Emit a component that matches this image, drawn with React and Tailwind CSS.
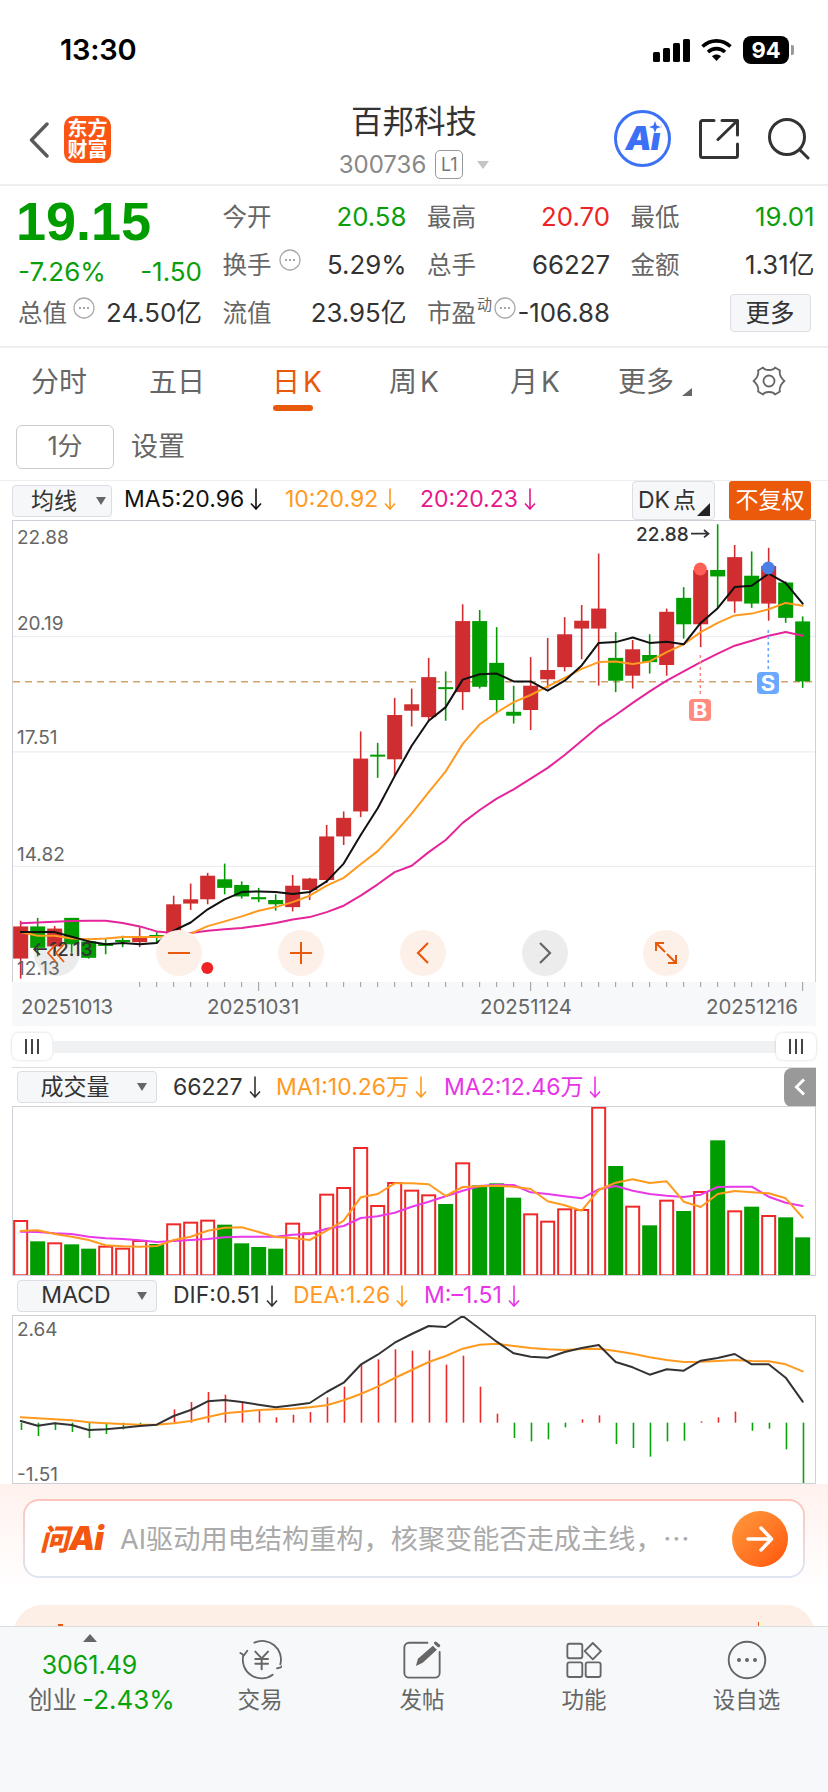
import React from 'react';

const RED = '#cf2d2f';
const GREEN = '#009c00';
const X = (i) => 20.67 + 17 * i;
const Y = (z) => 510 + z / 2.8;
const V = (z) => 1060 + z / 3;

const candles = [
  ['r',1150,1166,1256,1312],['g',1142,1166,1226,1250],['r',1165,1172,1222,1240],['g',1142,1142,1216,1240],
  ['g',1200,1208,1254,1256],['g',1200,1215,1219,1244],['g',1192,1204,1208,1224],['r',1168,1196,1210,1224],
  ['g',1182,1190,1196,1210],['r',1080,1104,1190,1196],['r',1046,1090,1102,1120],['r',1016,1024,1090,1104],
  ['g',990,1034,1058,1076],['g',1040,1050,1082,1088],['g',1058,1084,1090,1098],['g',1076,1092,1104,1122],
  ['r',1022,1052,1112,1124],['r',1030,1032,1064,1092],['r',882,914,1036,1044],['r',844,862,914,938],
  ['r',620,696,844,860],['g',652,685,690,750],['r',526,574,698,745],['r',500,544,562,606],
  ['r',414,468,580,590],['g',452,496,500,590],['r',264,311,510,560],['g',280,311,495,500],
  ['g',328,428,532,570],['g',492,565,576,598],['r',412,492,560,616],['r',358,448,474,500],
  ['r',300,348,440,452],['r',266,310,332,418],['r',122,276,332,492],['g',342,414,478,510],
  ['r',364,390,464,500],['g',348,406,426,458],['r',276,285,434,464],['g',216,246,320,360],
  ['r',150,168,320,384],['g',40,168,186,274],['r',98,132,256,288],['g',116,184,262,274],
  ['r',106,157,262,310],['g',200,203,302,316],['g',298,312,480,498],
];
const ma5 = [1182,1182,1182,1195,1208,1216,1212,1216,1212,1178,1155,1118,1090,1070,1068,1070,1075,1070,1040,990,910,835,745,660,590,552,475,460,458,480,480,506,478,435,372,370,357,372,369,376,316,275,216,212,178,205,262];
const ma10 = [1182,1192,1192,1200,1202,1200,1196,1196,1196,1192,1186,1165,1152,1138,1122,1112,1098,1080,1052,1030,992,955,905,850,790,732,655,600,567,538,518,494,470,445,426,424,431,424,398,376,342,316,295,290,278,260,268];
const ma20 = [1157,1155,1153,1151,1150,1150,1156,1166,1180,1184,1184,1178,1174,1170,1164,1156,1147,1140,1126,1108,1080,1048,1014,996,958,924,876,840,808,782,752,722,686,646,606,574,540,508,478,452,426,402,380,366,352,342,352];

const vols = [['r',483],['g',544],['r',550],['g',553],['g',566],['r',560],['r',566],['r',543],['g',552],['r',493],['r',488],['r',482],['g',494],['g',550],['g',561],['g',566],['r',491],['r',520],['r',404],['r',384],['r',264],['r',438],['r',369],['r',392],['r',406],['g',432],['r',310],['g',376],['g',370],['g',413],['r',463],['r',485],['r',448],['r',450],['r',143],['g',318],['r',440],['g',496],['r',422],['g',453],['r',396],['g',241],['r',454],['g',440],['r',468],['g',472],['g',532]];
const vm1 = [513,511,522,530,540,556,559,560,558,540,530,512,503,502,516,531,534,540,512,482,412,402,370,370,373,408,381,379,377,380,387,424,436,452,390,368,358,369,364,425,441,402,393,397,400,415,473];
const vm2 = [515,516,520,522,530,535,537,541,546,543,540,537,532,530,530,530,524,522,506,498,474,469,458,440,425,409,392,378,374,375,397,402,409,415,388,378,392,402,407,411,404,381,380,380,410,428,438];

const macd = [1110,1128,1110,1116,1134,1122,1108,1096,1088,1048,1026,996,1004,1026,1052,1072,1064,1056,1012,980,914,898,868,872,871,914,887,980,1061,1134,1144,1138,1102,1078,1066,1152,1164,1190,1144,1142,1084,1072,1055,1112,1106,1168,1272];
const dif = [1083,1097,1090,1095,1110,1108,1103,1098,1094,1068,1050,1024,1020,1026,1034,1042,1036,1029,996,968,914,884,848,822,798,801,768,806,845,880,890,893,876,864,855,906,922,944,928,932,902,894,882,913,913,953,1025];
const dea = [1072,1075,1078,1081,1087,1090,1092,1094,1094,1090,1083,1071,1060,1055,1050,1048,1046,1042,1036,1021,1002,980,954,930,906,888,866,854,851,858,864,868,870,867,866,873,881,892,900,906,905,903,900,903,904,913,934];

const pts = (arr, f) => arr.map((z, i) => `${X(i).toFixed(1)},${f(z).toFixed(1)}`).join(' ');

function Line({ data, f, color, w = 2 }) {
  return <polyline points={pts(data, f)} fill="none" stroke={color} strokeWidth={w} strokeLinejoin="round" strokeLinecap="round" />;
}

function Arrow() {
  return (
    <svg width="12" height="22" viewBox="0 0 12 22" className="ml-[6px] shrink-0" fill="none" stroke="currentColor" strokeWidth="1.6">
      <path d="M6 0.5V21M1 15.5L6 21L11 15.5" />
    </svg>
  );
}

function Dots({ className = '' }) {
  return (
    <svg width="22" height="22" viewBox="0 0 22 22" className={`shrink-0 ${className}`}>
      <circle cx="11" cy="11" r="10" fill="none" stroke="#aaaaaa" strokeWidth="1.3" />
      <circle cx="7" cy="11" r="1" fill="#888888" />
      <circle cx="11" cy="11" r="1" fill="#888888" />
      <circle cx="15" cy="11" r="1" fill="#888888" />
    </svg>
  );
}

function Cell({ label, value, color = '#333333', icon }) {
  return (
    <div className="flex items-center justify-between h-[48px]">
      <div className="flex items-center text-[#666666] text-[24.5px]">
        <span>{label}</span>
        {icon}
      </div>
      <span className="text-[25.8px]" style={{ color }}>{value}</span>
    </div>
  );
}

function Handle() {
  return (
    <div className="w-[40px] h-[27px] rounded-[7px] bg-white shadow-[0_0_3px_rgba(0,0,0,0.18)] flex items-center justify-center gap-[4px] shrink-0">
      <div className="w-[2px] h-[15px] bg-[#444444]" />
      <div className="w-[2px] h-[15px] bg-[#444444]" />
      <div className="w-[2px] h-[15px] bg-[#444444]" />
    </div>
  );
}

function Select({ children }) {
  return (
    <div className="relative flex items-center justify-center w-[140px] h-[32px] rounded-[4px] bg-[#f6f7f9] border border-[#dcdee3] text-[#333333] text-[23px] leading-none pr-[24px]">
      {children}
      <div className="absolute right-[9px] top-[11px] w-0 h-0 border-x-[5px] border-x-transparent border-t-[8px] border-t-[#666666]" />
    </div>
  );
}

function Circle({ left, bg, children }) {
  return (
    <div className={`absolute top-[409px] w-[46px] h-[46px] rounded-full flex items-center justify-center ${left} ${bg}`}>{children}</div>
  );
}

function MainChart() {
  return (
    <div className="relative ml-[12px] w-[804px] h-[462px] border-x border-t border-[#cfd1d8] overflow-hidden text-[19px] leading-none text-[#666666]">
      <svg width="802" height="461" viewBox="13 521 802 461" className="block">
        {[636.4, 751.8, 866.4].map((y) => (
          <line key={y} x1="13" x2="815" y1={y} y2={y} stroke="#ecedf2" strokeWidth="1.2" />
        ))}
        <line x1="13" x2="815" y1="681.8" y2="681.8" stroke="#d3a16c" strokeWidth="1.6" strokeDasharray="7 5" />
        <circle cx="56.7" cy="953" r="23" fill="#ececec" />
        {candles.map(([c, a, b, d, e], i) => {
          const col = c === 'r' ? RED : GREEN;
          const h = Math.max((d - b) / 2.8, 2);
          return (
            <g key={i}>
              <line x1={X(i)} x2={X(i)} y1={Y(a)} y2={Y(e)} stroke={col} strokeWidth="1.6" />
              <rect x={X(i) - 7.5} y={Y(b)} width="15" height={h} fill={col} />
            </g>
          );
        })}
        <Line data={ma20} f={Y} color="#e5249a" />
        <Line data={ma10} f={Y} color="#ff9a1f" />
        <Line data={ma5} f={Y} color="#111111" />
        <circle cx="700.3" cy="569" r="6.5" fill="#ff5f56" />
        <circle cx="768.3" cy="568" r="6.5" fill="#4a7fe6" />
        <line x1="700.3" x2="700.3" y1="655" y2="697" stroke="#ff8a80" strokeWidth="1.6" strokeDasharray="3 3" />
        <line x1="768.3" x2="768.3" y1="630" y2="672" stroke="#6aa9ff" strokeWidth="1.6" strokeDasharray="3 3" />
        <path d="M691 533.7H708M704 530L708.5 533.7L704 537.4" fill="none" stroke="#333333" strokeWidth="1.8" />
        <circle cx="207.3" cy="967.9" r="6" fill="#ee2424" />
      </svg>

      <span className="absolute left-[4px] top-[7px]">22.88</span>
      <span className="absolute left-[4px] top-[93px]">20.19</span>
      <span className="absolute left-[4px] top-[207px]">17.51</span>
      <span className="absolute left-[4px] top-[324px]">14.82</span>
      <span className="absolute left-[4px] top-[438px]">12.13</span>
      <span className="absolute left-[623px] top-[4px] text-[#333333] font-medium">22.88</span>
      <span className="absolute left-[18px] top-[419px] text-[#333333] font-medium">←12.13</span>

      <div className="absolute left-[676px] top-[178px] w-[22px] h-[22px] rounded-[4px] bg-[#ff8a7e] flex items-center justify-center text-white font-bold text-[22px]">B</div>
      <div className="absolute left-[744px] top-[151px] w-[22px] h-[22px] rounded-[4px] bg-[#6aa9ff] flex items-center justify-center text-white font-bold text-[22px]">S</div>

      <svg width="18" height="20" viewBox="0 0 18 20" className="absolute left-[34px] top-[422px]" fill="none" stroke="#e8590c" strokeWidth="1.8">
        <path d="M9 1L1 10L9 19M17 1L9 10L17 19" />
      </svg>

      <Circle left="left-[143px]" bg="bg-[#fdf0e9]">
        <div className="w-[22px] h-[2px] bg-[#e8590c]" />
      </Circle>
      <Circle left="left-[265px]" bg="bg-[#fdf0e9]">
        <svg width="24" height="24" viewBox="0 0 24 24" fill="none" stroke="#e8590c" strokeWidth="2"><path d="M1 12H23M12 1V23" /></svg>
      </Circle>
      <Circle left="left-[387px]" bg="bg-[#fdf0e9]">
        <svg width="14" height="24" viewBox="0 0 14 24" fill="none" stroke="#e8590c" strokeWidth="2.2"><path d="M12 2L2 12L12 22" /></svg>
      </Circle>
      <Circle left="left-[509px]" bg="bg-[#ececec]">
        <svg width="14" height="24" viewBox="0 0 14 24" fill="none" stroke="#666666" strokeWidth="2.2"><path d="M2 2L12 12L2 22" /></svg>
      </Circle>
      <Circle left="left-[630px]" bg="bg-[#fdf0e9]">
        <svg width="24" height="24" viewBox="0 0 24 24" fill="none" stroke="#e8590c" strokeWidth="2"><path d="M2 10V2H10M2 2L11 11M22 14V22H14M22 22L13 13" /></svg>
      </Circle>
    </div>
  );
}

function AxisBand() {
  const ticks = [];
  for (let i = 7; i <= 46; i++) ticks.push(i);
  return (
    <div className="relative ml-[12px] w-[804px] h-[44px] bg-[#f7f8fa] text-[20.4px] leading-none text-[#666666]">
      <svg width="804" height="10" viewBox="12 983 804 10" className="absolute left-0 top-0">
        {ticks.map((i) => (
          <line key={i} x1={X(i)} x2={X(i)} y1="983" y2={i === 14 || i === 30 || i === 46 ? 992 : 988} stroke="#999999" strokeWidth="1" />
        ))}
      </svg>
      <div className="flex pl-[9px] pt-[15px]">
        <span className="w-[186px]">20251013</span>
        <span className="w-[273px]">20251031</span>
        <span className="w-[226px]">20251124</span>
        <span>20251216</span>
      </div>
    </div>
  );
}

function VolChart() {
  return (
    <div className="ml-[12px] w-[804px] h-[170px] border border-[#cfd1d8]">
      <svg width="802" height="168" viewBox="13 1107 802 168" className="block">
        {vols.map(([c, z], i) =>
          c === 'r' ? (
            <rect key={i} x={X(i) - 6.5} y={V(z)} width="13" height={V(646) - V(z)} fill="#ffffff" stroke="#f02828" strokeWidth="2" />
          ) : (
            <rect key={i} x={X(i) - 7.5} y={V(z)} width="15" height={V(648) - V(z)} fill={GREEN} />
          )
        )}
        <Line data={vm2} f={V} color="#e83ae8" />
        <Line data={vm1} f={V} color="#ff9a1f" />
      </svg>
    </div>
  );
}

function MacdChart() {
  return (
    <div className="relative ml-[12px] w-[804px] h-[169px] border border-[#cfd1d8] text-[19px] leading-none text-[#666666]">
      <svg width="802" height="167" viewBox="13 1316 802 167" className="block">
        {macd.map((z, i) => (
          <line key={i} x1={X(i) + 0.8} x2={X(i) + 0.8} y1={V(1088)} y2={V(z)} stroke={z < 1088 ? '#f02828' : '#0aa30a'} strokeWidth="1.6" />
        ))}
        <Line data={dea} f={V} color="#ff9a1f" />
        <Line data={dif} f={V} color="#333333" />
      </svg>
      <span className="absolute left-[4px] top-[4px]">2.64</span>
      <span className="absolute left-[4px] top-[149px]">-1.51</span>
    </div>
  );
}

function StatusBar() {
  return (
    <div className="h-[96px] flex items-start justify-between pt-[35px] pl-[60px] pr-[34px]">
      <span className="text-[29px] leading-[29px] font-semibold text-black tracking-[-0.2px]">13:30</span>
      <div className="flex items-center gap-[10px] pt-[1px]">
        <div className="flex items-end gap-[3px] h-[23px]">
          <div className="w-[7px] h-[10px] rounded-[1.5px] bg-black" />
          <div className="w-[7px] h-[14px] rounded-[1.5px] bg-black" />
          <div className="w-[7px] h-[19px] rounded-[1.5px] bg-black" />
          <div className="w-[7px] h-[23px] rounded-[1.5px] bg-black" />
        </div>
        <svg width="33" height="24" viewBox="0 0 32 24" fill="none" stroke="#000000" strokeWidth="3.6" strokeLinecap="butt">
          <path d="M2 8.5C10 1 22 1 30 8.5" />
          <path d="M7.5 14C12.5 9.5 19.5 9.5 24.5 14" />
          <path d="M16 23L11.5 18.2C14 16 18 16 20.5 18.2Z" fill="#000000" stroke="none" />
        </svg>
        <div className="flex items-center gap-[2px]">
          <div className="w-[46px] h-[28px] rounded-[8px] bg-black text-white text-[22px] leading-none font-bold flex items-center justify-center">94</div>
          <div className="w-[3px] h-[10px] rounded-r-[2px] bg-[#999999]" />
        </div>
      </div>
    </div>
  );
}

function NavBar() {
  return (
    <div className="h-[90px] flex items-start border-b-2 border-[#eeeeee]">
      <div className="flex items-center pt-[20px] pl-[29px] w-[300px]">
        <svg width="20" height="36" viewBox="0 0 20 36" fill="none" stroke="#5a5a5a" strokeWidth="3.4" strokeLinecap="round" strokeLinejoin="round">
          <path d="M18 2L2.5 18L18 34" />
        </svg>
        <div className="ml-[15px] w-[47px] h-[47px] rounded-[10px] bg-[#fb5513] text-white font-bold text-[20px] leading-[21px] flex flex-col items-center justify-center">
          <span>东方</span>
          <span>财富</span>
        </div>
      </div>
      <div className="w-[228px] flex flex-col items-center">
        <span className="text-[31.5px] leading-[32px] text-[#333333] pt-[12px] -mt-[2px]">百邦科技</span>
        <div className="flex items-center mt-[12px]">
          <span className="text-[24px] leading-none text-[#888888]">300736</span>
          <span className="ml-[9px] w-[28px] h-[29px] rounded-[5px] border border-[#999999] text-[18px] text-[#777777] flex items-center justify-center">L1</span>
          <div className="ml-[14px] w-0 h-0 border-x-[6.5px] border-x-transparent border-t-[8px] border-t-[#c4c4c4]" />
        </div>
      </div>
      <div className="flex items-center pl-[86px] pt-[15px] gap-[28px]">
        <div className="relative w-[57px] h-[57px] rounded-full border-[3px] border-[#3c70f5] flex items-center justify-center text-[33px] leading-none font-black italic text-[#3c70f5] -mt-[1px]">
          <span className="tracking-[-1px]">Ai</span>
          <svg width="12" height="12" viewBox="0 0 12 12" className="absolute right-[7px] top-[8px]">
            <rect x="0" y="0" width="12" height="12" fill="#ffffff" />
            <path d="M6 0L7.6 4.4L12 6L7.6 7.6L6 12L4.4 7.6L0 6L4.4 4.4Z" fill="#3c70f5" />
          </svg>
        </div>
        <svg width="40" height="40" viewBox="0 0 40 40" fill="none" stroke="#333333" strokeWidth="3" strokeLinecap="round" strokeLinejoin="round">
          <path d="M15 1.5H3.5a2 2 0 0 0-2 2V36.5a2 2 0 0 0 2 2H36.5a2 2 0 0 0 2-2V25" />
          <path d="M19 20.5L38.5 1.5M23 1.5H38.5V16" />
        </svg>
        <svg width="42" height="42" viewBox="0 0 42 42" fill="none" stroke="#333333" strokeWidth="3" strokeLinecap="round" className="ml-[1px]">
          <circle cx="19" cy="19" r="17.5" />
          <path d="M32 32L40 40" />
        </svg>
      </div>
    </div>
  );
}

function Quote() {
  return (
    <div className="h-[162px] border-b-2 border-[#eeeeee] grid grid-cols-[202px_184px_183px_184px] grid-rows-[48px_48px_48px] gap-x-[20.5px] pt-[7px] leading-none">
      <div className="row-span-2 pl-[16px]">
        <div className="text-[54px] leading-[54px] font-bold text-[#009c00] pt-[1px] [font-family:'Liberation_Sans',sans-serif]">19.15</div>
        <div className="flex justify-between text-[26px] text-[#0a9e0a] mt-[11px] pl-[2px]">
          <span>-7.26%</span>
          <span>-1.50</span>
        </div>
      </div>
      <Cell label="今开" value="20.58" color="#0a9e0a" />
      <Cell label="最高" value="20.70" color="#ee2424" />
      <Cell label="最低" value="19.01" color="#0a9e0a" />
      <Cell label="换手" value="5.29%" icon={<Dots className="ml-[7px] -translate-y-[5px]" />} />
      <Cell label="总手" value="66227" />
      <Cell label="金额" value="1.31亿" />
      <div className="pl-[18px] flex items-center justify-between h-[48px]">
        <div className="flex items-center text-[#666666] text-[24.5px]">
          <span>总值</span>
          <Dots className="ml-[6px] -translate-y-[5px]" />
        </div>
        <span className="text-[#333333] text-[25.8px]">24.50亿</span>
      </div>
      <Cell label="流值" value="23.95亿" />
      <div className="flex items-center justify-between h-[48px]">
        <div className="flex items-center text-[#666666] text-[24.5px]">
          <span>市盈</span>
          <span className="text-[15px] -translate-y-[9px] ml-[1px]">动</span>
          <Dots className="ml-[2px] -translate-y-[5px]" />
        </div>
        <span className="text-[#333333] text-[25.8px]">-106.88</span>
      </div>
      <div className="flex items-center justify-end h-[48px] pr-[4px]">
        <div className="w-[81px] h-[38px] rounded-[4px] bg-[#f6f7f9] border border-[#dcdee3] flex items-center justify-center text-[#333333] text-[24.5px]">更多</div>
      </div>
    </div>
  );
}

function Tabs() {
  return (
    <>
      <div className="h-[68px] flex items-start pl-[31px] text-[28px] leading-none text-[#666666] pt-[20px]">
        <div className="w-[118px]">分时</div>
        <div className="w-[123px]">五日</div>
        <div className="w-[117px] relative text-[#e8590c]">
          日<span className="ml-[3px]">K</span>
          <div className="absolute left-[1px] top-[37px] w-[40px] h-[6px] rounded-[3px] bg-[#e8590c]" />
        </div>
        <div className="w-[121px]">周<span className="ml-[3px]">K</span></div>
        <div className="w-[108px]">月<span className="ml-[3px]">K</span></div>
        <div className="w-[134px] relative">
          更多
          <svg width="10" height="8" viewBox="0 0 10 8" className="absolute left-[64px] top-[20px]"><path d="M10 0V8H0Z" fill="#666666" /></svg>
        </div>
        <svg width="34" height="32" viewBox="0 0 34 32" fill="none" stroke="#666666" strokeWidth="1.8" className="-mt-[3px]">
          <path d="M11 2.5C12 4.5 15 5 17 5C19 5 22 4.5 23 2.5L28 5.5C27 8 28 10 29 12C30 13.5 31 15 32.5 16C31 17 30 18.5 29 20C28 22 27 24 28 26.5L23 29.5C22 27.5 19 27 17 27C15 27 12 27.5 11 29.5L6 26.5C7 24 6 22 5 20C4 18.5 3 17 1.5 16C3 15 4 13.5 5 12C6 10 7 8 6 5.5Z" strokeLinejoin="round" />
          <circle cx="17" cy="16" r="5.5" />
        </svg>
      </div>
      <div className="h-[65px] border-b border-[#eeeeee] flex items-start pl-[16px] pt-[9px]">
        <div className="w-[98px] h-[44px] rounded-[6px] border border-[#cccccc] flex items-center justify-center text-[25px] text-[#666666]">1分</div>
        <div className="ml-[17px] text-[27px] leading-[44px] text-[#666666]">设置</div>
      </div>
    </>
  );
}

function ChartHeader() {
  return (
    <div className="h-[39px] flex items-start pl-[12px] text-[23px] leading-none">
      <div className="relative mt-[4px] w-[100px] h-[32px] rounded-[4px] bg-[#f6f7f9] border border-[#dcdee3] text-[#333333] flex items-center pl-[18px]">
        均线
        <div className="absolute right-[5px] top-[11px] w-0 h-0 border-x-[5px] border-x-transparent border-t-[8px] border-t-[#666666]" />
      </div>
      <div className="ml-[12px] flex items-center h-[36px] text-[#111111] w-[161px]">MA5:20.96<Arrow /></div>
      <div className="flex items-center h-[36px] text-[#ff9a1f] w-[135px]">10:20.92<Arrow /></div>
      <div className="flex items-center h-[36px] text-[#e5188e] w-[212px]">20:20.23<Arrow /></div>
      <div className="relative w-[83px] h-[39px] rounded-[4px] bg-[#f6f7f9] border border-[#dcdee3] text-[#333333] flex items-center pl-[5px]">
        <span>DK</span><span className="ml-[3px]">点</span>
        <svg width="13" height="13" viewBox="0 0 13 13" className="absolute right-[4px] bottom-[3px]"><path d="M13 0V13H0Z" fill="#222222" /></svg>
      </div>
      <div className="ml-[14px] w-[82px] h-[39px] rounded-[3px] bg-[#ea5a0a] text-white flex items-center justify-center text-[23px]">不复权</div>
    </div>
  );
}

function VolHeader() {
  return (
    <div className="h-[39px] border-t border-[#dddddd] flex items-center ml-[12px] w-[804px] pl-[5px] text-[23px] leading-none">
      <Select>成交量</Select>
      <div className="ml-[16px] flex items-center text-[#333333] w-[103px]">66227<Arrow /></div>
      <div className="flex items-center text-[#ff9a1f] w-[168px]">MA1:10.26万<Arrow /></div>
      <div className="flex items-center text-[#e833e8]">MA2:12.46万<Arrow /></div>
      <div className="ml-auto w-[32px] h-[39px] rounded-l-[8px] bg-[#999999] flex items-center justify-center">
        <svg width="12" height="18" viewBox="0 0 12 18" fill="none" stroke="#ffffff" strokeWidth="3"><path d="M10 1.5L2.5 9L10 16.5" /></svg>
      </div>
    </div>
  );
}

function MacdHeader() {
  return (
    <div className="h-[39px] flex items-center ml-[12px] pl-[5px] text-[23px] leading-none">
      <Select><span className="pl-[2px]">MACD</span></Select>
      <div className="ml-[16px] flex items-center text-[#333333] w-[120px]">DIF:0.51<Arrow /></div>
      <div className="flex items-center text-[#ff9a1f] w-[131px]">DEA:1.26<Arrow /></div>
      <div className="flex items-center text-[#e833e8]">M:–1.51<Arrow /></div>
    </div>
  );
}

function AiSection() {
  return (
    <div className="relative h-[142px] bg-linear-to-b from-[#fff2ee] to-[#ffffff] to-[75%] px-[14px] overflow-hidden">
      <div className="mt-[15px] mx-[9px] h-[79px] rounded-[16px] p-[2px] bg-linear-to-b from-[#fdc4bb] to-[#dfe5f3]">
        <div className="h-full rounded-[14px] bg-white flex items-center pl-[15px] pr-[15px]">
          <span className="w-[64px] shrink-0 text-[#f4570f] italic font-black leading-none whitespace-nowrap">
            <span className="text-[29px]">问</span><span className="text-[33px] tracking-[-1px]">Ai</span>
          </span>
          <span className="ml-[16px] text-[27.2px] leading-none text-[#aaaaaa] whitespace-nowrap">
            AI驱动用电结构重构，核聚变能否走成主线，<span className="[font-family:'Noto_Sans_CJK_SC',sans-serif]">…</span>
          </span>
          <div className="ml-auto shrink-0 w-[56px] h-[56px] rounded-full bg-linear-to-br from-[#ff9a3d] to-[#ff5200] flex items-center justify-center">
            <svg width="28" height="28" viewBox="0 0 28 28" fill="none" stroke="#ffffff" strokeWidth="3.4" strokeLinecap="round" strokeLinejoin="round"><path d="M2 14H25M15 3L25.5 14L15 25" /></svg>
          </div>
        </div>
      </div>
      <div className="relative mt-[27px] h-[40px] rounded-t-[28px] bg-[#fdeee6]">
        <div className="absolute left-[44px] top-[19px] w-[5px] h-[2px] bg-[#e8590c]" />
        <div className="absolute left-[744px] top-[17px] w-[1px] h-[4px] bg-[#e8590c]" />
      </div>
    </div>
  );
}

function BottomItem({ label, children }) {
  return (
    <div className="flex flex-col items-center">
      <div className="h-[41px] mt-[12px] flex items-center justify-center">{children}</div>
      <span className="mt-[6px] text-[22.5px] leading-[28px] text-[#666666]">{label}</span>
    </div>
  );
}

function BottomBar() {
  return (
    <div className="h-[166px] border-t border-[#dddddd] bg-[#f7f8fa] grid grid-cols-[179px_162px_162px_162px_163px]">
      <div className="relative flex flex-col items-center">
        <div className="mt-[7px] w-0 h-0 border-x-[7px] border-x-transparent border-b-[8px] border-b-[#666666]" />
        <span className="mt-[9px] text-[25px] leading-[28px] text-[#0aa30a]">3061.49</span>
        <div className="mt-[7px] ml-[24px] flex whitespace-nowrap leading-[28px] items-center">
          <span className="text-[#666666] text-[24.5px]">创业</span>
          <span className="ml-[5px] text-[#0aa30a] text-[26px]">-2.43%</span>
        </div>
      </div>
      <BottomItem label="交易">
        <svg width="44" height="41" viewBox="36 36 132 123" fill="none" stroke="#666666" strokeWidth="5.5" strokeLinecap="round" strokeLinejoin="round">
          <path d="M52 85A56 56 0 0 0 140 143" />
          <path d="M43 78L54 85L64 71" />
          <path d="M85 47A56 56 0 0 1 163 112" />
          <path d="M153 124L164 121L171 115" />
          <path d="M88 74L107 94L126 74M88 96H126M88 110H126M107 94V127" strokeWidth="6" />
        </svg>
      </BottomItem>
      <BottomItem label="发帖">
        <svg width="38" height="38" viewBox="540 44 112 112" fill="none" stroke="#666666" strokeWidth="5.5" strokeLinecap="round">
          <path d="M612 49H558A14 14 0 0 0 544 63V138A14 14 0 0 0 558 152H634A14 14 0 0 0 648 138V76" />
          <path d="M578 118L584 96L628 58L640 70L598 108Z" fill="#666666" stroke="none" />
          <path d="M636 50L645 58" strokeWidth="9" />
        </svg>
      </BottomItem>
      <BottomItem label="功能">
        <svg width="37" height="36" viewBox="1029 45 107 106" fill="none" stroke="#666666" strokeWidth="5.5" strokeLinejoin="round">
          <rect x="1032" y="50" width="44" height="43" rx="6" />
          <rect x="1032" y="105" width="44" height="43" rx="6" />
          <rect x="1086" y="105" width="44" height="43" rx="6" />
          <path d="M1107 48L1131 72L1107 96L1083 72Z" />
        </svg>
      </BottomItem>
      <BottomItem label="设自选">
        <svg width="40" height="40" viewBox="0 0 40 40" fill="none">
          <circle cx="20" cy="20" r="18.3" stroke="#666666" strokeWidth="1.9" />
          <circle cx="12" cy="20" r="2" fill="#666666" />
          <circle cx="20" cy="20" r="2" fill="#666666" />
          <circle cx="28" cy="20" r="2" fill="#666666" />
        </svg>
      </BottomItem>
    </div>
  );
}

export default function App() {
  return (
    <div className="w-[828px] h-[1792px] overflow-hidden bg-white flex flex-col [font-family:Inter,'Noto_Sans_CJK_SC',sans-serif]">
      <StatusBar />
      <NavBar />
      <Quote />
      <Tabs />
      <ChartHeader />
      <MainChart />
      <AxisBand />
      <div className="h-[41px] ml-[12px] w-[804px] flex items-center">
        <Handle />
        <div className="flex-1 h-[12px] bg-[#f0f1f3]" />
        <Handle />
      </div>
      <VolHeader />
      <VolChart />
      <MacdHeader />
      <MacdChart />
      <AiSection />
      <BottomBar />
    </div>
  );
}
